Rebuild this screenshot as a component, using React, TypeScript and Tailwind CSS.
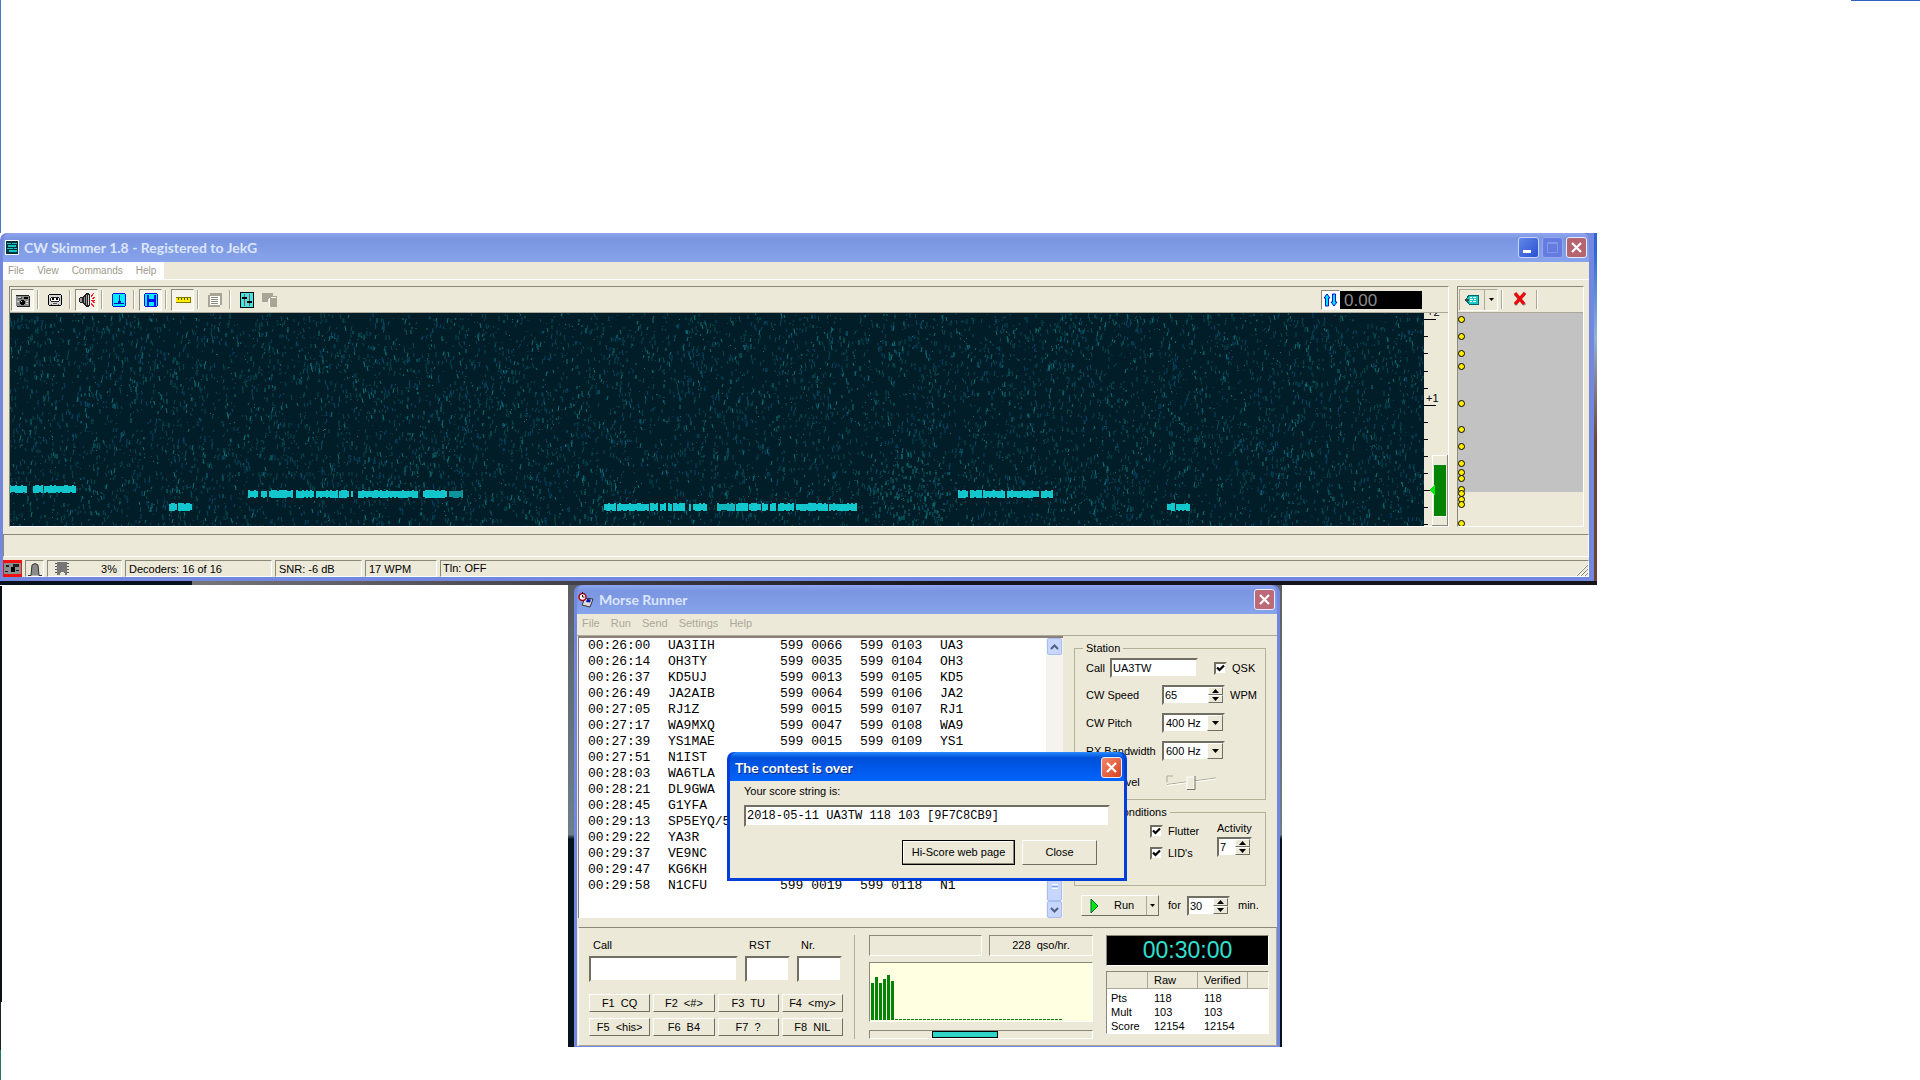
import { useMemo, useState } from "react";
import type { ReactNode } from "react";

const TAHOMA = "font-['Liberation_Sans',Arial,sans-serif]";
const SUNKEN = "border border-t-[#8a887a] border-l-[#8a887a] border-b-white border-r-white";
const FIELD = "border-2 border-t-[#716f64] border-l-[#716f64] border-b-[#ece9d8] border-r-[#ece9d8] bg-white";
const RAISED = "border border-t-white border-l-white border-b-[#716f64] border-r-[#716f64] bg-[#ece9d8]";

const qsos = [
  ["00:26:00", "UA3IIH", "599 0066", "599 0103", "UA3"],
  ["00:26:14", "OH3TY", "599 0035", "599 0104", "OH3"],
  ["00:26:37", "KD5UJ", "599 0013", "599 0105", "KD5"],
  ["00:26:49", "JA2AIB", "599 0064", "599 0106", "JA2"],
  ["00:27:05", "RJ1Z", "599 0015", "599 0107", "RJ1"],
  ["00:27:17", "WA9MXQ", "599 0047", "599 0108", "WA9"],
  ["00:27:39", "YS1MAE", "599 0015", "599 0109", "YS1"],
  ["00:27:51", "N1IST", "", "", ""],
  ["00:28:03", "WA6TLA", "", "", ""],
  ["00:28:21", "DL9GWA", "", "", ""],
  ["00:28:45", "G1YFA", "", "", ""],
  ["00:29:13", "SP5EYQ/5", "", "", ""],
  ["00:29:22", "YA3R", "", "", ""],
  ["00:29:37", "VE9NC", "", "", ""],
  ["00:29:47", "KG6KH", "", "", ""],
  ["00:29:58", "N1CFU", "599 0019", "599 0118", "N1"],
];

const fKeys = ["F1  CQ", "F2  <#>", "F3  TU", "F4  <my>", "F5  <his>", "F6  B4", "F7  ?", "F8  NIL"];

const scores = [
  ["Pts", "118", "118"],
  ["Mult", "103", "103"],
  ["Score", "12154", "12154"],
];

// x, y, width and strength of every keyed signal in the waterfall
const signals: [number, number, number, number][] = [
  [0, 176, 18, 1], [24, 176, 9, 1], [35, 176, 32, 1], [67, 176, 15, 0.35],
  [160, 194, 7, 1], [169, 194, 14, 1], [184, 194, 18, 0.3],
  [239, 181, 10, 1], [252, 181, 31, 1], [287, 181, 41, 1], [330, 181, 14, 1],
  [349, 181, 60, 1], [412, 181, 26, 1], [440, 181, 14, 0.7],
  [595, 194, 11, 1], [608, 194, 31, 1], [641, 194, 21, 1], [664, 194, 18, 1], [684, 194, 14, 1],
  [708, 194, 17, 0.9], [727, 194, 11, 1], [740, 194, 11, 1], [753, 194, 32, 1],
  [787, 194, 31, 1], [820, 194, 28, 1], [849, 194, 14, 0.3],
  [909, 181, 14, 0.4], [928, 181, 16, 0.4], [949, 181, 10, 1], [961, 181, 11, 1], [974, 181, 22, 1],
  [998, 181, 32, 1], [1032, 181, 11, 1], [1044, 181, 6, 0.4],
  [1158, 194, 7, 1], [1167, 194, 14, 1],
  [240, 161, 104, 0.2], [1233, 161, 60, 0.25], [0, 160, 50, 0.15],
];

const markers = [6, 23, 40, 53, 90, 116, 133, 150, 159, 165, 176, 180, 186, 191, 210];

function Waterfall() {
  const noise = useMemo(() => {
    let seed = 73;
    const rnd = () => {
      seed = (seed * 16807) % 2147483647;
      return seed / 2147483647;
    };
    const paths = ["", "", ""];
    for (let i = 0; i < 9500; i++) {
      const x = Math.floor(rnd() * 1414);
      const y = Math.floor(rnd() * 213);
      const lean = Math.floor(rnd() * 3) - 1;
      const len = 1 + Math.floor(rnd() * 5);
      const kind = rnd() < 0.5 ? 0 : rnd() < 0.6 ? 1 : 2;
      paths[kind] += `M${x} ${y}l${lean} ${len}`;
    }
    // disturbed patch between two transmissions
    for (let i = 0; i < 110; i++) {
      paths[2] += `M${860 + Math.floor(rnd() * 75)} ${150 + Math.floor(rnd() * 55)}v${1 + Math.floor(rnd() * 4)}`;
    }
    const keyed = signals.map(([x, y, w, a]) => {
      let d = "";
      for (let cx = x; cx < x + w; cx += a < 0.5 ? 3 : 2) {
        if (rnd() < (a < 0.5 ? 0.4 : 0.06)) continue;
        const h = a < 0.5 ? 2 + Math.floor(rnd() * 3) : 6 + Math.floor(rnd() * 3);
        d += `M${cx} ${y - Math.floor(h / 2)}v${h}`;
      }
      return { d, a };
    });
    return { paths, keyed };
  }, []);

  return (
    <svg className="block h-full w-full bg-[#011d27]" viewBox="0 0 1414 213" preserveAspectRatio="none">
      <path d={noise.paths[0]} stroke="#06484f" strokeWidth="1" />
      <path d={noise.paths[1]} stroke="#074468" strokeWidth="1" />
      <path d={noise.paths[2]} stroke="#0c7078" strokeWidth="1" />
      {noise.keyed.map((k, i) => (
        <path key={i} d={k.d} stroke="#16e4ea" strokeOpacity={k.a} strokeWidth={k.a < 0.5 ? 1 : 1.7} />
      ))}
    </svg>
  );
}

function Scale() {
  const ticks = [23, 40, 58, 75, 109, 126, 143, 160, 194, 211];
  return (
    <svg className="block h-[213px] w-[24px] shrink-0" viewBox="0 0 24 213" shapeRendering="crispEdges">
      <g stroke="#000">
        {ticks.map((y) => (
          <path key={y} d={`M0 ${y + 0.5}h4`} />
        ))}
        <path d="M0 6.5h12M0 92.5h12M0 177.5h6" />
      </g>
      <text x="3" y="3" fontSize="11" className="font-['Liberation_Sans',sans-serif]">+2</text>
      <text x="2" y="89" fontSize="11" className="font-['Liberation_Sans',sans-serif]">+1</text>
      <path d="M8 212.500V142.500H23" fill="none" stroke="#fff" />
      <path d="M23.500 142V212.500H8" fill="none" stroke="#8a887a" />
      <path d="M10 203.500h13" stroke="#fff" />
      <rect x="10" y="152" width="12" height="51" fill="#058305" />
      <path d="M5 177l6-6v12z" fill="#00f000" />
    </svg>
  );
}

function Arrow({ up = false }: { up?: boolean }) {
  return (
    <svg width="7" height="4" viewBox="0 0 7 4" className="block">
      <path d={up ? "M0 4L3.500 0L7 4z" : "M0 0h7L3.500 4z"} fill="#000" />
    </svg>
  );
}

function CloseButton({ color }: { color: string }) {
  return (
    <button aria-label="Close window" className={`flex h-[21px] w-[21px] items-center justify-center rounded-[3px] border border-[#e8ecff] ${color}`}>
      <svg width="13" height="13" viewBox="0 0 13 13">
        <path d="M2 2l9 9M11 2l-9 9" stroke="#fff" strokeWidth="2.200" />
      </svg>
    </button>
  );
}

function TitleBar({ icon, title, active = false, children }: { icon?: ReactNode; title: string; active?: boolean; children: ReactNode }) {
  return (
    <div
      className={`flex h-[29px] items-center gap-[5px] rounded-t-[7px] pr-[2px] ${
        active
          ? "bg-linear-to-b from-[#2b8bff] via-[#0050d8] via-20% to-[#0263ff] pt-[2px]"
          : "bg-linear-to-b from-[#8ea6ee] via-[#7b95e0] via-20% to-[#86a4ec]"
      }`}
    >
      {icon}
      <h2
        className={`flex-1 truncate font-['Lato',sans-serif] text-[14px] leading-[20px] font-bold ${
          active ? "pl-[5px] text-white [text-shadow:1px_1px_#0a2a80]" : "text-[#dbe5fb]"
        }`}
      >
        {title}
      </h2>
      <div className="flex gap-[3px]">{children}</div>
    </div>
  );
}

function Sep() {
  return <div className="mr-[4px] ml-[3px] h-[19px] w-[2px] shrink-0 border-l border-[#aca899] bg-white" />;
}

function Tool({ label, pressed = false, children }: { label: string; pressed?: boolean; children: ReactNode }) {
  return (
    <button
      aria-label={label}
      className={`flex h-[22px] w-[23px] shrink-0 items-center justify-center ${
        pressed ? "border border-t-[#8a887a] border-l-[#8a887a] border-b-white border-r-white bg-[#f5f3ea]" : ""
      }`}
    >
      <svg width="16" height="16" viewBox="0 0 16 16" shapeRendering="crispEdges">
        {children}
      </svg>
    </button>
  );
}

function SkimmerToolbar() {
  return (
    <div className="flex h-[25px] items-center pl-px">
      <Tool label="Radio" pressed>
        <path d="M1 3h13v11H1z" fill="#8a8a8a" />
        <path d="M1 3h13v1H1zM14 4h1v11H2v-1h12z" fill="#222" />
        <path d="M3 5h4v2H3z" fill="#444" />
        <path d="M3 5h3v1H3z" fill="#ddd" />
        <path d="M9 5h4v2H9z" fill="#000" />
        <path d="M6 8h3v1h1v3H9v1H6v-1H5V9h1z" fill="#000" />
        <path d="M6 9h1v1H6zM2 9h2v1H2zM11 9h2v1h-2zM11 11h2v1h-2z" fill="#ddd" />
      </Tool>
      <Sep />
      <Tool label="Recorder">
        <path d="M2 2h12v1h1v10h-1v1H2v-1H1V3h1z" fill="#000" />
        <path d="M2 3h12v10H2z" fill="#d4d4d4" />
        <path d="M4 5h8v1h1v3h-1v1H4V9H3V6h1z" fill="#222" />
        <path d="M4 6h8v3H4z" fill="#fff" />
        <path d="M5 6h2v2H5zM9 6h2v2H9z" fill="#000" />
        <path d="M4 12h1v1H4zM6 11h4v1H6zM11 12h1v1h-1z" fill="#555" />
      </Tool>
      <Sep />
      <Tool label="Audio" pressed>
        <path d="M0 6h1V5h3V4h1V3h1V2h1V1h3v1h1v12h-1v1H7v-1H6v-1H5v-1H4v-1H1v-1H0z" fill="#222" />
        <path d="M1 6h2v4H1zM5 5h1v6H5zM7 3h1v10H7z" fill="#9a9a9a" />
        <path d="M9 3h1v10H9z" fill="#d8d8d8" />
        <path d="M12 5l3-4M12 8h4M12 11l3 4M13 7l3-2M13 9l3 2" stroke="#f02020" fill="none" />
      </Tool>
      <Sep />
      <Tool label="Spectrum">
        <path d="M2 1h12v1h1v12h-1v1H2v-1H1V2h1z" fill="#0010f0" />
        <path d="M2 2h12v12H2z" fill="#00ecff" />
        <path d="M8 3h1v8H8zM3 11h10v1H3zM7 9h3v2H7z" fill="#0010c0" />
      </Tool>
      <Sep />
      <Tool label="Waterfall" pressed>
        <path d="M2 1h12v1h1v12h-1v1H2v-1H1V2h1z" fill="#0010f0" />
        <path d="M2 2h12v12H2z" fill="#00ecff" />
        <path d="M4 3h2v11H4zM11 3h2v11h-2zM6 7h5v3H6z" fill="#0010f0" />
      </Tool>
      <Sep />
      <Tool label="Ruler" pressed>
        <path d="M1 5h15v6H1z" fill="#7a7a00" />
        <path d="M1 6h14v4H1z" fill="#ffee00" />
        <path d="M3 6h1v2H3zM6 6h1v2H6zM9 6h1v2H9zM12 6h1v2h-1z" fill="#555500" />
      </Tool>
      <Sep />
      <Tool label="Log">
        <path d="M3 1h12v12H3zM1 3h12v12H1z" fill="#a8a597" />
        <path d="M3 4h10v9H3z" fill="#fff" />
        <path d="M4 5h7v1H4zM4 7h7v1H4zM4 9h7v1H4zM4 11h7v1H4z" fill="#8a887a" />
      </Tool>
      <Sep />
      <Tool label="Settings">
        <path d="M1 0h14v16H1z" fill="#000" />
        <path d="M2 1h12v14H2z" fill="#3fe6e6" />
        <path d="M5 2h1v12H5zM10 2h1v12h-1z" fill="#b04040" />
        <path d="M3 5h5v2H3zM8 9h5v2H8z" fill="#000" />
      </Tool>
      <Tool label="Windows">
        <path d="M0 1h11v3H0zM0 4h6v6H0zM6 4h9v3H6zM8 7h7v8H8z" fill="#a8a597" />
        <path d="M7 6h1v9H7zM9 5h5v1H9z" fill="#fff" />
      </Tool>
      <div className="flex-1" />
      <div className="mr-[26px] flex h-[20px] items-center">
        <button aria-label="Swap" className={`flex h-[20px] w-[19px] items-center justify-center bg-white ${SUNKEN}`}>
          <svg width="15" height="14" viewBox="0 0 15 14">
            <path d="M4 1L7 5H5.500V13H2.500V5H1z" fill="#00e4ff" stroke="#0010d0" />
            <path d="M11 13L14 9H12.500V1H9.500V9H8z" fill="#00e4ff" stroke="#0010d0" />
          </svg>
        </button>
        <output className="h-[18px] w-[82px] bg-black pl-[4px] text-[17px] leading-[19px] text-[#8c8c8c]">0.00</output>
      </div>
    </div>
  );
}

function CwSkimmer() {
  return (
    <div className="absolute top-[233px] right-[323px] left-0">
      <div className="flex">
        <section className={`min-w-0 flex-1 rounded-tl-[7px] bg-[#7387df] pr-[5px] pb-[4px] pl-[3px] text-[11px] ${TAHOMA}`}>
          <TitleBar
            title="CW Skimmer 1.8 - Registered to JekG"
            icon={
              <svg width="14" height="15" viewBox="0 0 14 15" className="ml-[2px]" shapeRendering="crispEdges">
                <rect width="14" height="15" fill="#fff" />
                <rect x="1" y="1" width="12" height="13" fill="#003038" />
                <path d="M2 3h4v1H2zM7 3h5v1H7zM3 5h8v2H3zM2 8h6v1H2zM9 8h3v1H9zM4 10h8v2H4z" fill="#10c8c8" />
              </svg>
            }
          >
            <button aria-label="Minimize" className="flex h-[21px] w-[21px] items-end rounded-[3px] border border-[#c8d4f8] bg-linear-to-br from-[#6486e8] to-[#2a4fd0] pb-[4px] pl-[4px]">
              <span className="h-[3px] w-[8px] bg-white" />
            </button>
            <button aria-label="Maximize" className="flex h-[21px] w-[21px] items-center justify-center rounded-[3px] border border-[#93a9ee] bg-[#647ce0]">
              <span className="h-[11px] w-[11px] border border-t-2 border-[#8497e6]" />
            </button>
            <CloseButton color="bg-[#b4656f]" />
          </TitleBar>
          <div className="bg-[#ece9d8]">
            <nav className="flex h-[18px] border-b border-white text-[10px]">
              <div className="flex gap-[13px] bg-white pr-[8px] pl-[5px] leading-[15px] text-[#9c998a]">
                <button>File</button>
                <button>View</button>
                <button>Commands</button>
                <button>Help</button>
              </div>
            </nav>
            <div className="flex gap-[8px] pt-[6px] pr-[5px] pl-[6px]">
              <div className={`min-w-0 flex-1 ${SUNKEN}`}>
                <SkimmerToolbar />
                <div className="flex h-[214px] border-t border-[#aca899]">
                  <div className="min-w-0 flex-1">
                    <Waterfall />
                  </div>
                  <Scale />
                </div>
              </div>
              <div className={`w-[127px] shrink-0 ${SUNKEN}`}>
                <div className="flex h-[25px] items-center">
                  <div className="ml-px flex border border-t-[#aca899] border-l-[#aca899] border-white">
                    <button aria-label="Labels" className="flex h-[20px] w-[25px] items-center justify-center border-r border-[#aca899]">
                      <svg width="14" height="10" viewBox="0 0 14 10" shapeRendering="crispEdges">
                        <path d="M4 0h9v9H4L1 5z" fill="#20c8c8" stroke="#066" />
                        <path d="M5 2h2v1H5zM8 2h3v1H8zM5 4h3v1H5zM9 4h2v1H9zM5 6h2v1H5zM8 6h3v1H8z" fill="#fff" />
                        <path d="M0 4h4v2H0z" fill="#444" />
                      </svg>
                    </button>
                    <button aria-label="Label options" className="flex h-[20px] w-[12px] items-center justify-center">
                      <svg width="5" height="3" viewBox="0 0 5 3"><path d="M0 0h5L2.500 3z" /></svg>
                    </button>
                  </div>
                  <Sep />
                  <button aria-label="Clear" className="flex h-[20px] w-[26px] items-center justify-center">
                    <svg width="14" height="15" viewBox="0 0 14 15">
                      <path d="M2 2l10 11M12 1L2 13" stroke="#8a8a8a" strokeWidth="3" />
                      <path d="M2 1l9 11M12 1L2 12" stroke="#f00808" strokeWidth="3.200" />
                    </svg>
                  </button>
                  <Sep />
                </div>
                <div className="h-[214px] border-t border-[#aca899]">
                  <div className="h-[179px] bg-[#c2c2c2]">
                    <svg width="8" height="213" viewBox="0 0 8 213" className="block overflow-hidden">
                      {markers.map((y) => (
                        <circle key={y} cx="3.500" cy={y + 0.5} r="3" fill="#ffee00" stroke="#000" />
                      ))}
                    </svg>
                  </div>
                </div>
              </div>
            </div>
            <div className={`mt-[7px] h-[23px] ${SUNKEN}`} />
            <footer className="flex h-[20px] items-stretch gap-[3px] pt-[3px] leading-[16px] whitespace-nowrap text-black">
              <div className="flex w-[19px] items-center justify-center bg-[#f01010]">
                <svg width="17" height="11" viewBox="0 0 17 11" shapeRendering="crispEdges">
                  <rect width="17" height="11" fill="#8a9090" />
                  <path d="M2 2h3v2H2zM9 1h6v3H9zM1 8h3v1H1zM12 7h3v1h-3z" fill="#222" />
                  <rect x="7" y="4" width="4" height="5" fill="#000" />
                </svg>
              </div>
              <div className={`flex w-[19px] items-end justify-center ${SUNKEN}`}>
                <svg width="14" height="13" viewBox="0 0 14 13">
                  <path d="M0 12.500h3L4 2Q7-1 10 2L11 12.500h3" fill="#8a8a8a" stroke="#333" />
                </svg>
              </div>
              <div className={`flex w-[75px] items-center justify-between pr-[4px] pl-[7px] ${SUNKEN}`}>
                <svg width="14" height="13" viewBox="0 0 14 13" shapeRendering="crispEdges">
                  <path d="M2 0h10v13h-2v-2H9v-1H6v1H5v2H2z" fill="#777" />
                  <path d="M0 1h2v1H0zM0 4h2v1H0zM0 7h2v1H0zM0 10h2v1H0zM12 1h2v1h-2zM12 4h2v1h-2zM12 7h2v1h-2zM12 10h2v1h-2z" fill="#555" />
                </svg>
                <span>3%</span>
              </div>
              <div className={`w-[147px] pl-[3px] ${SUNKEN}`}>Decoders: 16 of 16</div>
              <div className={`w-[87px] pl-[3px] ${SUNKEN}`}>SNR: -6 dB</div>
              <div className={`w-[72px] pl-[3px] ${SUNKEN}`}>17 WPM</div>
              <div className={`flex flex-1 items-end justify-between pl-[2px] ${SUNKEN}`}>
                <span>Tln: OFF</span>
                <svg width="12" height="12" viewBox="0 0 12 12">
                  <path d="M1 12L12 1M5 12l7-7M9 12l3-3" stroke="#8a887a" />
                  <path d="M0 12L12 0M4 12l8-8M8 12l4-4" stroke="#fff" />
                </svg>
              </div>
            </footer>
          </div>
        </section>
        <div className="w-[3px] bg-linear-to-b from-[#2a66d8] from-5% via-[#8fb4d8] via-30% to-[#6a4436] to-60%" />
      </div>
      <div className="h-[4px] bg-linear-to-r from-[#07101c] from-12% via-[#77747a] via-12% to-[#15141a] to-60%" />
    </div>
  );
}

function Spin({ id, value, width }: { id: string; value: string; width: string }) {
  const [val, setVal] = useState(value);
  return (
    <div className={`flex h-[20px] ${width} ${FIELD}`}>
      <input id={id} value={val} onChange={(e) => setVal(e.target.value)} className="min-w-0 flex-1 bg-white pl-px leading-[16px] outline-none" />
      <div className="flex w-[15px] flex-col">
        <button aria-label="Increase" onClick={() => setVal(String(Number(val) + 1))} className={`flex h-[8px] items-center justify-center ${RAISED}`}>
          <Arrow up />
        </button>
        <button aria-label="Decrease" onClick={() => setVal(String(Number(val) - 1))} className={`flex h-[8px] items-center justify-center ${RAISED}`}>
          <Arrow />
        </button>
      </div>
    </div>
  );
}

function Combo({ id, value }: { id: string; value: string }) {
  return (
    <div className={`flex h-[20px] w-[63px] ${FIELD}`}>
      <select id={id} defaultValue={value} className="min-w-0 flex-1 appearance-none bg-white pl-[2px] leading-[16px] outline-none">
        <option>{value}</option>
      </select>
      <span className={`flex w-[16px] items-center justify-center ${RAISED}`}>
        <Arrow />
      </span>
    </div>
  );
}

function Check({ label }: { label: string }) {
  const [on, setOn] = useState(true);
  return (
    <label className="flex h-[16px] items-center gap-[5px]">
      <span className={`grid h-[13px] w-[13px] place-items-center ${FIELD}`}>
        <input type="checkbox" checked={on} onChange={() => setOn(!on)} className="peer col-start-1 row-start-1 h-[9px] w-[9px] appearance-none" />
        <svg width="9" height="9" viewBox="0 0 9 9" className="pointer-events-none invisible col-start-1 row-start-1 peer-checked:visible">
          <path d="M1 3.500L3.500 6L8 1.500" fill="none" stroke="#000" strokeWidth="2.200" />
        </svg>
      </span>
      {label}
    </label>
  );
}

function ScrollButton({ down = false }: { down?: boolean }) {
  return (
    <button
      aria-label={down ? "Scroll down" : "Scroll up"}
      className="flex h-[17px] w-[15px] items-center justify-center rounded-[2px] border border-[#a9bdf0] bg-[#c6d6fd]"
    >
      <svg width="9" height="6" viewBox="0 0 9 6">
        <path d={down ? "M1 1l3.500 3.500L8 1" : "M1 5l3.500-3.500L8 5"} fill="none" stroke="#4d6185" strokeWidth="2" />
      </svg>
    </button>
  );
}

function Log() {
  return (
    <div className="flex h-[282px] min-w-0 flex-1 border-t-2 border-l border-[#8a8078] bg-white">
      <div className="min-w-0 flex-1 overflow-hidden pl-[9px]">
        <table className="w-[400px] table-fixed font-['Liberation_Mono',monospace] text-[13px] leading-[16px] whitespace-nowrap">
          <tbody>
            {qsos.map((q) => (
              <tr key={q[0]}>
                <td className="w-[80px]">{q[0]}</td>
                <td className="w-[112px]">{q[1]}</td>
                <td className="w-[80px]">{q[2]}</td>
                <td className="w-[80px]">{q[3]}</td>
                <td>{q[4]}</td>
              </tr>
            ))}
          </tbody>
        </table>
      </div>
      <div className="flex w-[17px] flex-col items-center bg-[#f4f3ee]">
        <ScrollButton />
        <div className="flex-1" />
        <div className="flex h-[70px] w-[15px] flex-col items-center justify-end gap-px rounded-[2px] border border-[#a9bdf0] bg-[#c6d6fd] pb-[11px]">
          <span className="h-px w-[6px] bg-white" />
          <span className="h-px w-[6px] bg-[#8ca4e4]" />
          <span className="h-px w-[6px] bg-white" />
        </div>
        <ScrollButton down />
      </div>
    </div>
  );
}

function StationPanel() {
  const row = "flex h-[28px] items-center pl-[3px]";
  return (
    <div className="flex w-[214px] shrink-0 flex-col pr-[11px] pl-[11px]">
      <fieldset className="mt-[5px] h-[159px] border border-[#b4b296] pl-[8px]">
        <legend className="px-[3px] leading-[14px]">Station</legend>
        <div className="flex h-[26px] items-center pl-[3px]">
          <label htmlFor="call" className="w-[24px]">Call</label>
          <input id="call" defaultValue="UA3TW" className={`h-[20px] w-[88px] px-px leading-[16px] outline-none ${FIELD}`} />
          <div className="ml-[16px]"><Check label="QSK" /></div>
        </div>
        <div className={row}>
          <label htmlFor="speed" className="w-[76px]">CW Speed</label>
          <Spin id="speed" value="65" width="w-[63px]" />
          <span className="pl-[5px]">WPM</span>
        </div>
        <div className={row}>
          <label htmlFor="pitch" className="w-[76px]">CW Pitch</label>
          <Combo id="pitch" value="400 Hz" />
        </div>
        <div className={row}>
          <label htmlFor="bw" className="w-[76px]">RX Bandwidth</label>
          <Combo id="bw" value="600 Hz" />
        </div>
        <div className="flex h-[34px] items-center pl-[3px]">
          <label htmlFor="level" className="w-[80px]">Mon. Level</label>
          <div className="grid items-center">
            <svg width="54" height="15" viewBox="0 0 54 15" className="col-start-1 row-start-1">
              <path d="M1 7V1h6M1 9.500L50 3" fill="none" stroke="#aca899" />
              <path d="M1 10.500L50 4" stroke="#fff" />
              <path d="M21 2h7v12h-7z" fill="#ece9d8" stroke="#fff" />
              <path d="M29 1v13.500h-8" fill="none" stroke="#716f64" />
            </svg>
            <input id="level" type="range" className="col-start-1 row-start-1 w-[54px] opacity-0" />
          </div>
        </div>
      </fieldset>
      <fieldset className="mt-[5px] h-[81px] border border-[#b4b296] pl-[8px]">
        <legend className="px-[3px] leading-[14px]">Band Conditions</legend>
        <div className="flex">
          <div className="flex w-[67px] flex-col gap-[6px] pt-[4px]">
            <Check label="QRN" />
            <Check label="QRM" />
          </div>
          <div className="flex w-[67px] flex-col gap-[6px] pt-[4px]">
            <Check label="Flutter" />
            <Check label="LID's" />
          </div>
          <div className="pt-px">
            <label htmlFor="activity" className="block leading-[17px]">Activity</label>
            <Spin id="activity" value="7" width="w-[35px]" />
          </div>
        </div>
      </fieldset>
      <div className="mt-[9px] flex items-center pl-[7px]">
        <div className={`flex h-[21px] w-[78px] ${RAISED}`}>
          <button className="flex flex-1 items-center gap-[15px] pl-[8px]">
            <svg width="9" height="16" viewBox="0 0 9 16">
              <path d="M1 1l7 7l-7 7z" fill="#00e800" stroke="#064" />
            </svg>
            Run
          </button>
          <button aria-label="Run options" className="flex w-[12px] items-center justify-center border-l border-[#aca899]">
            <svg width="5" height="3" viewBox="0 0 5 3"><path d="M0 0h5L2.500 3z" /></svg>
          </button>
        </div>
        <label htmlFor="minutes" className="w-[28px] pl-[9px]">for</label>
        <Spin id="minutes" value="30" width="w-[43px]" />
        <span className="pl-[8px]">min.</span>
      </div>
    </div>
  );
}

function RateChart() {
  const bars = [37, 43, 37, 41, 45, 39];
  return (
    <svg className="block h-[58px] w-full" viewBox="0 0 222 58" preserveAspectRatio="none" shapeRendering="crispEdges">
      <rect width="222" height="58" fill="#ffffe1" />
      {bars.map((h, i) => (
        <rect key={i} x={1 + i * 4} y={57 - h} width="3" height={h} fill="#058305" />
      ))}
      <path d="M25 56.500h168" stroke="#058305" strokeDasharray="3 1" />
    </svg>
  );
}

function MorseRunner() {
  return (
    <div className="absolute top-[585px] right-[638px] left-[568px] bg-linear-to-b from-[#5b6064] via-[#6c7f8c] via-54% to-[#05131d] to-55% pr-[2px] pl-[6px]">
      <section className={`rounded-t-[7px] bg-[#7387df] px-[3px] pb-px text-[11px] text-black ${TAHOMA}`}>
        <TitleBar
          title="Morse Runner"
          icon={
            <svg width="16" height="16" viewBox="0 0 16 16" className="ml-px">
              <path d="M7 6l8 1l-3 8l-8-2z" fill="#ddd" stroke="#333" />
              <path d="M9 7l4 .5l-1 3l-4-.5z" fill="#0010c0" />
              <circle cx="4.500" cy="5" r="3.500" fill="#fff" stroke="#a00818" strokeWidth="1.500" />
              <path d="M4.500 0v2M4.500 5V3M4.500 5h2" stroke="#400" />
            </svg>
          }
        >
          <CloseButton color="bg-[#bc6a78]" />
        </TitleBar>
        <div className="bg-[#ece9d8]">
          <nav className="flex h-[22px] gap-[11px] border-b border-[#aca899] pl-[5px] leading-[16px] text-[#aca899]">
            <button className="h-[17px]">File</button>
            <button className="h-[17px]">Run</button>
            <button className="h-[17px]">Send</button>
            <button className="h-[17px]">Settings</button>
            <button className="h-[17px]">Help</button>
          </nav>
          <div className="flex pl-px">
            <Log />
            <StationPanel />
          </div>
          <div className="mt-[9px] ml-px flex border border-t-[#8a887a] border-l-white border-r-[#aca899] border-b-[#aca899] pt-[7px] pr-[7px] pb-[6px] pl-[10px]">
            <div className="w-[254px]">
              <div className="flex gap-[7px]">
                <div className="w-[149px]">
                  <label htmlFor="qso-call" className="block pt-[3px] pl-[4px] leading-[14px]">Call</label>
                  <input id="qso-call" className={`mt-[4px] block h-[26px] w-full outline-none ${FIELD}`} />
                </div>
                <div className="w-[45px]">
                  <label htmlFor="qso-rst" className="block pt-[3px] pl-[4px] leading-[14px]">RST</label>
                  <input id="qso-rst" className={`mt-[4px] block h-[26px] w-full outline-none ${FIELD}`} />
                </div>
                <div className="w-[45px]">
                  <label htmlFor="qso-nr" className="block pt-[3px] pl-[4px] leading-[14px]">Nr.</label>
                  <input id="qso-nr" className={`mt-[4px] block h-[26px] w-full outline-none ${FIELD}`} />
                </div>
              </div>
              <div className="mt-[12px] grid grid-cols-4 gap-x-[3px] gap-y-[6px]">
                {fKeys.map((k) => (
                  <button key={k} className={`h-[18px] text-center leading-[16px] whitespace-pre ${RAISED}`}>
                    {k}
                  </button>
                ))}
              </div>
            </div>
            <div className="mr-[14px] ml-[11px] border-l border-[#b4b296]" />
            <div className="min-w-0 flex-1">
              <div className="flex h-[21px] gap-[7px]">
                <div className={`flex-1 ${SUNKEN}`} />
                <div className={`w-[104px] text-center leading-[19px] whitespace-pre ${SUNKEN}`}>228  qso/hr.</div>
              </div>
              <div className={`mt-[6px] ${SUNKEN}`}>
                <RateChart />
              </div>
              <div className={`mt-[8px] flex h-[9px] ${SUNKEN}`}>
                <div className="ml-[62px] h-[7px] w-[66px] border border-black bg-[#30d5c8]" />
              </div>
            </div>
            <div className="ml-[13px] w-[163px] shrink-0">
              <div className={`h-[31px] bg-black text-center text-[23px] leading-[29px] text-[#30e0d0] ${SUNKEN}`}>00:30:00</div>
              <table className={`mt-[5px] w-full table-fixed border-separate border-spacing-0 bg-white text-left leading-[14px] ${SUNKEN}`}>
                <thead>
                  <tr className="h-[17px] bg-[#ece9d8]">
                    <th className="w-[41px] border-r border-b border-[#aca899]" />
                    <th className="w-[50px] border-r border-b border-[#aca899] pl-[6px] font-normal">Raw</th>
                    <th className="w-[50px] border-r border-b border-[#aca899] pl-[6px] font-normal">Verified</th>
                    <th className="border-b border-[#aca899]" />
                  </tr>
                </thead>
                <tbody>
                  <tr className="h-[2px]" />
                  {scores.map((s) => (
                    <tr key={s[0]}>
                      <td className="pl-[4px]">{s[0]}</td>
                      <td className="pl-[6px]">{s[1]}</td>
                      <td className="pl-[6px]">{s[2]}</td>
                    </tr>
                  ))}
                </tbody>
              </table>
            </div>
          </div>
        </div>
      </section>
    </div>
  );
}

function ContestDialog() {
  return (
    <section
      role="dialog"
      aria-label="The contest is over"
      className={`absolute top-[752px] right-[793px] left-[727px] rounded-t-[7px] bg-[#0040d8] px-[3px] pb-[3px] text-[11px] text-black ${TAHOMA}`}
    >
      <TitleBar title="The contest is over" active>
        <CloseButton color="bg-linear-to-br from-[#f08868] to-[#d83c18]" />
      </TitleBar>
      <div className="flex flex-col bg-[#ece9d8] px-[14px] pt-[3px] pb-[13px]">
        <label htmlFor="score" className="leading-[15px]">Your score string is:</label>
        <input
          id="score"
          defaultValue="2018-05-11 UA3TW 118 103 [9F7C8CB9]"
          className={`mt-[6px] h-[22px] w-[366px] max-w-full px-px font-['Liberation_Mono',monospace] text-[12px] outline-none ${FIELD}`}
        />
        <div className="mt-[13px] flex justify-end gap-[7px] pr-[13px]">
          <button className="h-[25px] w-[113px] border border-black bg-[#ece9d8] shadow-[inset_-1px_-1px_#8a887a,inset_1px_1px_#fff]">Hi-Score web page</button>
          <button className={`h-[25px] w-[75px] ${RAISED}`}>Close</button>
        </div>
      </div>
    </section>
  );
}

export default function App() {
  return (
    <main className="relative min-h-screen w-full overflow-hidden bg-white">
      <div className="absolute top-0 left-0 h-[233px] w-px bg-[#4a78c8]" />
      <div className="absolute top-0 right-0 h-px w-[69px] bg-[#3060c0]" />
      <div className="absolute top-[586px] left-0 h-[416px] w-[2px] bg-[#0a1018]" />
      <div className="absolute top-[1002px] left-0 h-[48px] w-px bg-[#1a2428]" />
      <div className="absolute top-[1050px] bottom-0 left-0 w-px bg-[#1f7a5a]" />
      <CwSkimmer />
      <MorseRunner />
      <ContestDialog />
    </main>
  );
}
